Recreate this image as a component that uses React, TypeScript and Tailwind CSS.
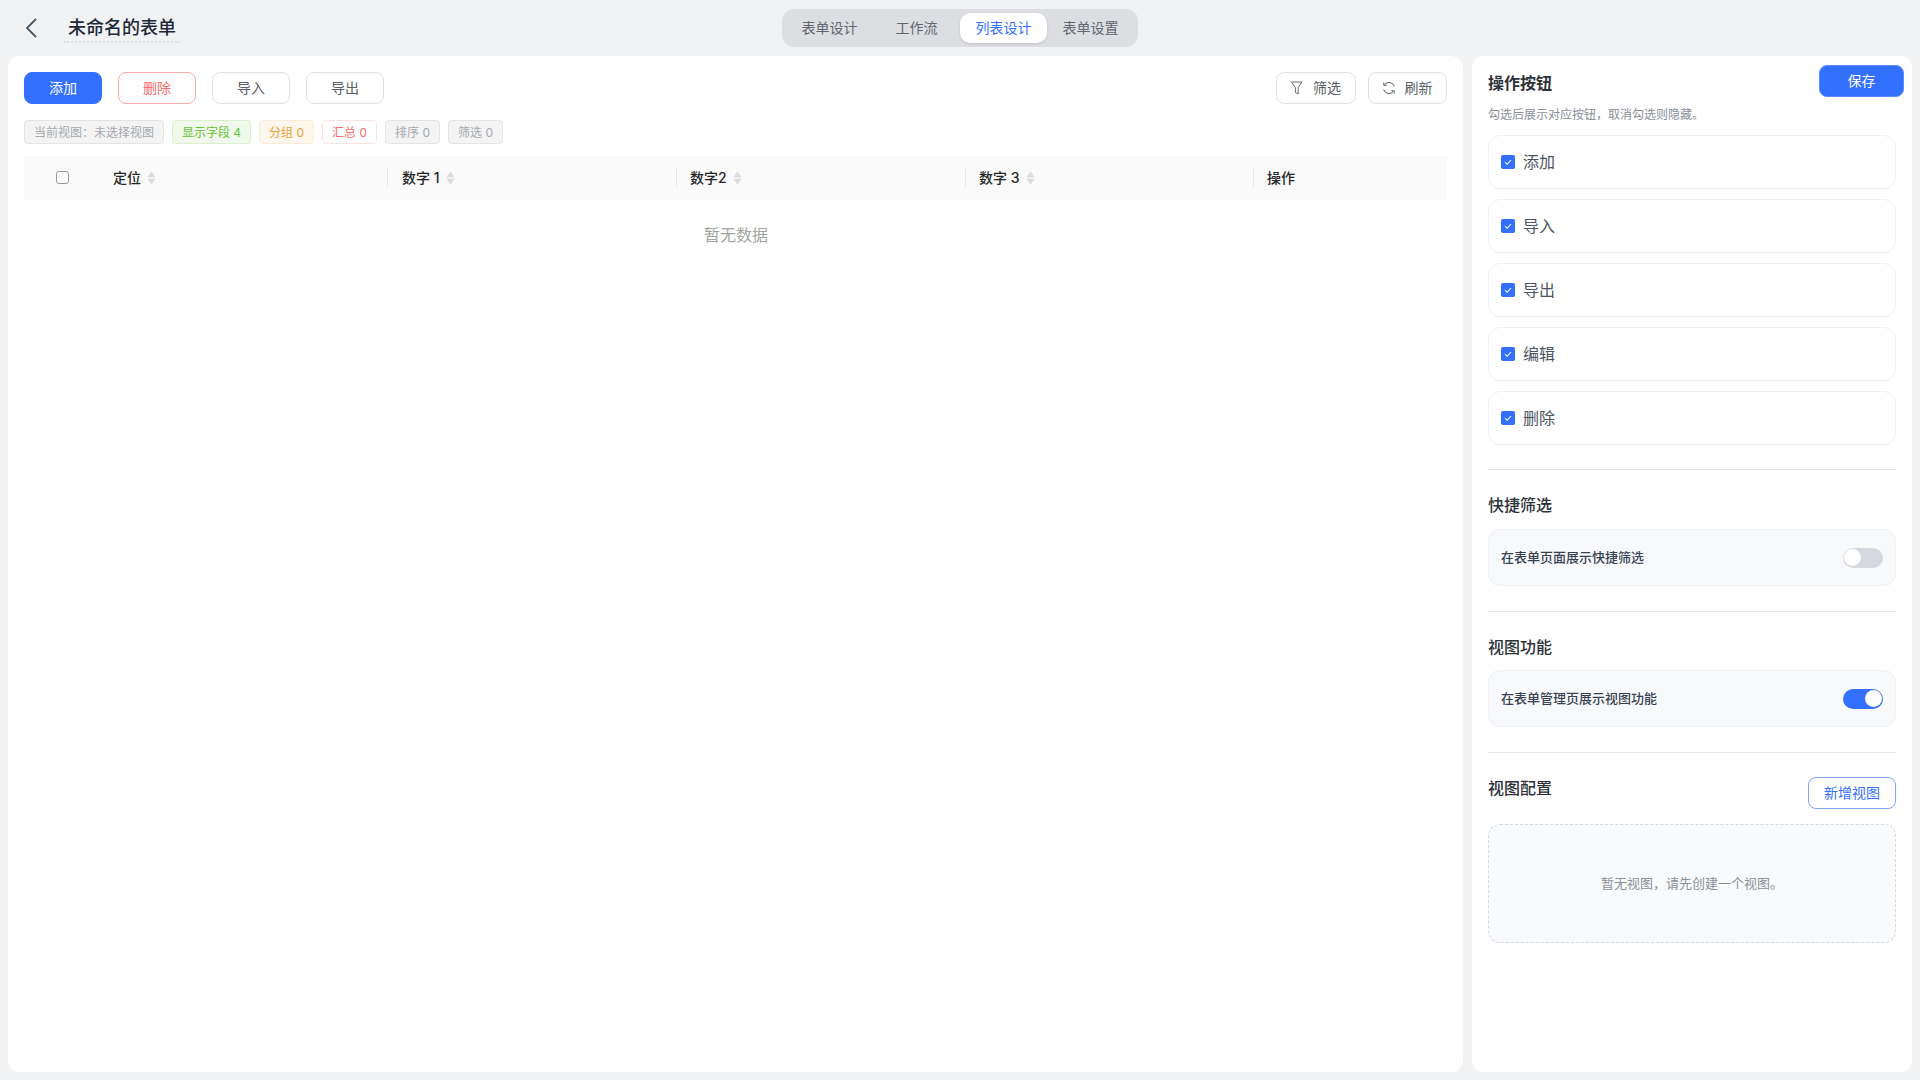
const FONT = "font-['Inter','Noto_Sans_CJK_SC',sans-serif]";

function Btn({ label, cls }: { label: string; cls: string }) {
  return (
    <button className={`h-8 w-[78px] rounded-lg border text-sm ${cls}`}>{label}</button>
  );
}

function Tag({ label, cls, w }: { label: string; cls: string; w: string }) {
  return (
    <span className={`flex h-6 items-center justify-center rounded border pt-px text-xs ${w} ${cls}`}>{label}</span>
  );
}

function Sort() {
  return (
    <svg width="9" height="14" viewBox="0 0 9 14" className="ml-[6px] shrink-0">
      <path d="M4.5 0.3 L8.5 6.2 H0.5 Z" fill="#dcdcdc" />
      <path d="M4.5 13.7 L8.5 7.8 H0.5 Z" fill="#dcdcdc" />
    </svg>
  );
}

function HeadCell({ label, sort = true, w, sep = true, pad = "pl-[14px]" }: { label: string; sort?: boolean; w: string; sep?: boolean; pad?: string }) {
  return (
    <div className={`relative flex h-full items-center text-sm font-medium text-[#262626] ${pad} ${w}`}>
      {sep && <span className="absolute left-0 top-3 h-5 w-px bg-[#e8e8e8]" />}
      <span>{label}</span>
      {sort && <Sort />}
    </div>
  );
}

function CheckItem({ label }: { label: string }) {
  return (
    <div className="flex h-[54px] items-center rounded-xl border border-[#eef0f5] bg-white pl-[12px]">
      <span className="flex h-[14px] w-[14px] items-center justify-center rounded-[2px] bg-[#3370ff]">
        <svg width="10" height="10" viewBox="0 0 10 10" fill="none">
          <path d="M2 5.2 L4.2 7.3 L8 3" stroke="#fff" strokeWidth="1.1" />
        </svg>
      </span>
      <span className="ml-[8px] text-base text-[#4b5563]">{label}</span>
    </div>
  );
}

function ToggleCard({ label, on }: { label: string; on: boolean }) {
  return (
    <div className="flex h-[57px] items-center justify-between rounded-xl border border-[#eef0f5] bg-[#f8f9fb] pl-[12px] pr-[12px]">
      <span className="text-[13px] font-medium text-[#374151]">{label}</span>
      {on ? (
        <span className="flex h-5 w-10 items-center justify-end rounded-full bg-[#3370ff] pr-[1px]">
          <span className="h-[17px] w-[17px] rounded-full bg-white" />
        </span>
      ) : (
        <span className="flex h-5 w-10 items-center rounded-full bg-[#d5d8de] pl-[1px]">
          <span className="h-[17px] w-[17px] rounded-full bg-white" />
        </span>
      )}
    </div>
  );
}

export default function App() {
  return (
    <div className={`flex h-[1080px] flex-col bg-[#f1f2f4] ${FONT}`}>
      <header className="grid h-14 shrink-0 grid-cols-[1fr_356px_1fr] items-center">
        <div className="flex items-center pl-[24px]">
          <svg width="16" height="22" viewBox="0 0 16 22" fill="none">
            <path d="M12 2 L3 11 L12 20" stroke="#4b5563" strokeWidth="1.8" />
          </svg>
          <div className="ml-[24px] -mt-[2px] flex h-[32px] w-[116px] items-center justify-center border-b-2 border-dotted border-[#dcdfe4] pt-[4px] text-lg font-medium text-[#1f2937]">
            未命名的表单
          </div>
        </div>
        <div className="flex h-[38px] items-center rounded-xl bg-[#dcdee1] p-1 text-sm text-[#5f6670]">
          <div className="flex h-[30px] w-[87px] items-center justify-center">表单设计</div>
          <div className="flex h-[30px] w-[87px] items-center justify-center">工作流</div>
          <div className="flex h-[30px] w-[87px] items-center justify-center rounded-[10px] bg-white text-[#3370ff] shadow-[0_1px_3px_rgba(0,0,0,0.12)]">列表设计</div>
          <div className="flex h-[30px] w-[87px] items-center justify-center">表单设置</div>
        </div>
        <div />
      </header>
      <main className="flex min-h-0 flex-1 gap-[9px] px-2 pb-2">
        <section className="flex w-[1455px] flex-col rounded-xl bg-white px-4 pt-4">
          <div className="flex items-center justify-between">
            <div className="flex gap-4">
              <Btn label="添加" cls="border-[#3370ff] bg-[#3370ff] text-white" />
              <Btn label="删除" cls="border-[#ffa8a8] bg-white text-[#f56c6c]" />
              <Btn label="导入" cls="border-[#dfe1e8] bg-white text-[#5a5f68]" />
              <Btn label="导出" cls="border-[#dfe1e8] bg-white text-[#5a5f68]" />
            </div>
            <div className="flex gap-3">
              <button className="flex h-8 w-[80px] items-center justify-center gap-[8px] rounded-lg border border-[#dfe1e8] bg-white text-sm text-[#5a5f68]">
                <svg width="14" height="14" viewBox="0 0 14 14" fill="none">
                  <path d="M0.5 1 H11 L7.2 6.6 V13 L4.4 11.4 V6.6 Z" stroke="#5a5f68" strokeWidth="0.9" strokeLinejoin="round" />
                </svg>
                筛选
              </button>
              <button className="flex h-8 w-[79px] items-center justify-center gap-[8px] rounded-lg border border-[#dfe1e8] bg-white text-sm text-[#5a5f68]">
                <svg width="14" height="14" viewBox="0 0 14 14" fill="none" className="-ml-px mr-px">
                  <path d="M12.4 5.5 A5.6 5.6 0 0 0 2.6 3.6" stroke="#5a5f68" strokeWidth="1" />
                  <path d="M1.6 8.5 A5.6 5.6 0 0 0 11.4 10.4" stroke="#5a5f68" strokeWidth="1" />
                  <path d="M1.8 1.4 V4.3 H4.7" stroke="#5a5f68" strokeWidth="1" />
                  <path d="M12.2 12.6 V9.7 H9.3" stroke="#5a5f68" strokeWidth="1" />
                </svg>
                刷新
              </button>
            </div>
          </div>
          <div className="mt-4 flex gap-2">
            <Tag label="当前视图：未选择视图" w="w-[140px]" cls="border-[#e3e4e6] bg-[#f4f4f5] text-[#a6a9ad]" />
            <Tag label="显示字段 4" w="w-[79px]" cls="border-[#d9f2cc] bg-[#f0f9eb] text-[#67c23a]" />
            <Tag label="分组 0" w="w-[55px]" cls="border-[#faecd8] bg-[#fdf6ec] text-[#e6a23c]" />
            <Tag label="汇总 0" w="w-[55px]" cls="border-[#fde2e2] bg-white text-[#f56c6c]" />
            <Tag label="排序 0" w="w-[55px]" cls="border-[#e3e4e6] bg-[#f4f4f5] text-[#a6a9ad]" />
            <Tag label="筛选 0" w="w-[55px]" cls="border-[#e3e4e6] bg-[#f4f4f5] text-[#a6a9ad]" />
          </div>
          <div className="mt-3 flex h-11 w-[1423px] items-center bg-[#fafafa]">
            <div className="flex h-full w-[75px] items-center pl-[32px]">
              <span className="-mt-[1px] h-[13px] w-[13px] rounded-[3px] border border-[#9a9a9a] bg-white" />
            </div>
            <HeadCell label="定位" w="w-[288px]" sep={false} />
            <HeadCell label="数字 1" w="w-[289px]" pad="pl-[15px]" />
            <HeadCell label="数字2" w="w-[289px]" />
            <HeadCell label="数字 3" w="w-[288px]" />
            <HeadCell label="操作" w="flex-1" sort={false} />
          </div>
          <div className="mt-[23px] w-[1423px] pl-px text-center text-base text-[#a3a3a3]">暂无数据</div>
        </section>
        <aside className="relative flex w-[440px] flex-col rounded-xl bg-white px-4 pt-[15px]">
          <button className="absolute right-2 top-[9px] h-8 w-[85px] rounded-lg border border-[#5b8cff] bg-[#3370ff] text-sm text-white">保存</button>
          <h2 className="text-base font-semibold leading-6 text-[#2d3138]">操作按钮</h2>
          <p className="mt-[10px] text-xs leading-5 text-[#8a8f98]">勾选后展示对应按钮，取消勾选则隐藏。</p>
          <div className="mt-[10px] flex flex-col gap-[10px]">
            <CheckItem label="添加" />
            <CheckItem label="导入" />
            <CheckItem label="导出" />
            <CheckItem label="编辑" />
            <CheckItem label="删除" />
          </div>
          <div className="mt-6 h-px bg-[#e5e7eb]" />
          <h2 className="mt-[23px] text-base font-medium leading-6 text-[#2d3138]">快捷筛选</h2>
          <div className="mt-3">
            <ToggleCard label="在表单页面展示快捷筛选" on={false} />
          </div>
          <div className="mt-[25px] h-px bg-[#e5e7eb]" />
          <h2 className="mt-[23px] text-base font-medium leading-6 text-[#2d3138]">视图功能</h2>
          <div className="mt-[11px]">
            <ToggleCard label="在表单管理页展示视图功能" on />
          </div>
          <div className="mt-[25px] h-px bg-[#e5e7eb]" />
          <div className="mt-6 flex items-start justify-between">
            <h2 className="-mt-px text-base font-medium leading-6 text-[#2d3138]">视图配置</h2>
            <button className="h-8 w-[88px] rounded-lg border border-[#7aa5ff] bg-white text-sm text-[#3370ff]">新增视图</button>
          </div>
          <div className="mt-[15px] flex h-[119px] items-center justify-center rounded-xl border border-dashed border-[#d5d8de] bg-[#f9fafb] text-[13px] text-[#8a8f98]">
            暂无视图，请先创建一个视图。
          </div>
        </aside>
      </main>
    </div>
  );
}
